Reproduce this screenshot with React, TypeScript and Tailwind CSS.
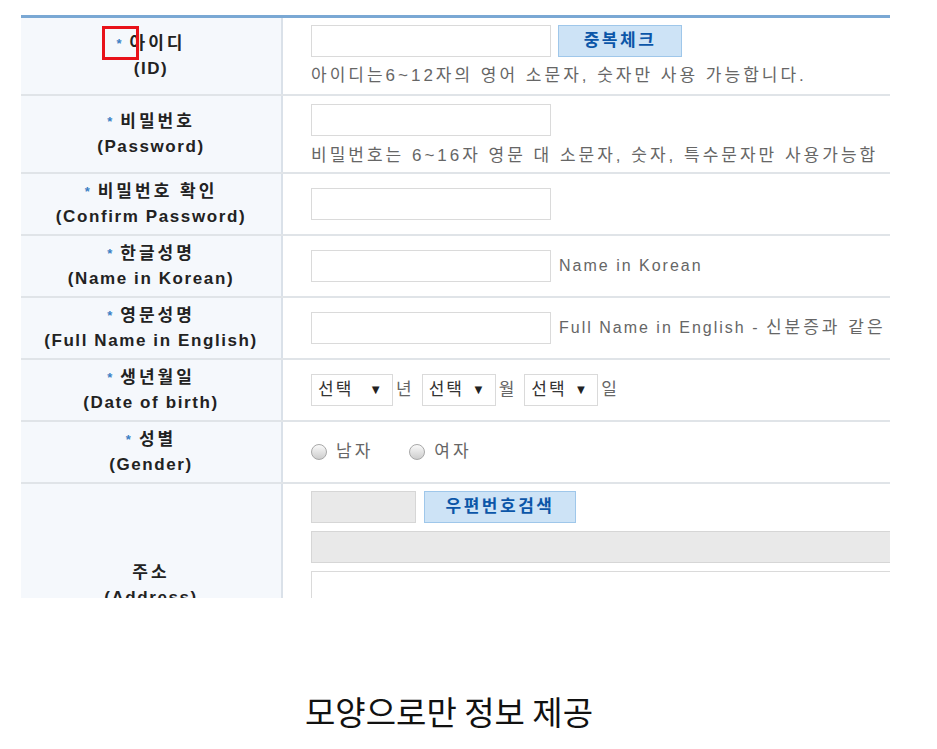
import React from "react";

type LabelProps = {
  ko: string;
  en: string;
  req?: boolean;
  mark?: boolean;
};

function Label({ ko, en, req = true, mark = false }: LabelProps) {
  return (
    <div className="w-[262px] shrink-0 self-stretch bg-[#f5f8fc] border-r-2 border-[#dae1e9] flex flex-col items-center justify-center text-[17px] leading-[25px] font-bold text-[#222]">
      <div className="flex items-center">
        {req && (
          <span className="relative mr-[8px] text-[13px] leading-[13px] text-[#3b7fc4]">
            *
            {mark && (
              <span className="absolute left-[-15px] top-[-11px] w-[37px] h-[34px] border-[3px] border-[#e8121a]" />
            )}
          </span>
        )}
        <span className="tracking-[3px]">{ko}</span>
      </div>
      <div className="tracking-[1.6px]">{en}</div>
    </div>
  );
}

function TextBox({ w = "w-[240px]", gray = false }: { w?: string; gray?: boolean }) {
  return (
    <input
      type="text"
      className={`${w} h-[32px] shrink-0 border outline-none ${gray ? "bg-[#e9e9e9] border-[#d6d6d6]" : "bg-white border-[#dadada]"}`}
    />
  );
}

function BlueButton({ children, w }: { children: React.ReactNode; w: string }) {
  return (
    <button
      type="button"
      className={`${w} h-[32px] shrink-0 bg-[#cde3f6] border border-[#9fc7ea] text-[17px] font-bold text-[#0b56a8] tracking-[2.5px]`}
    >
      {children}
    </button>
  );
}

function Select({ w, gap }: { w: string; gap: string }) {
  return (
    <div className={`${w} h-[32px] border border-[#dadada] bg-white flex items-center pl-[6px] text-[17px] text-[#333]`}>
      <span className="tracking-[2px]">선택</span>
      <span className={`${gap} text-[13px] text-[#222]`}>▼</span>
    </div>
  );
}

function Radio({ label }: { label: string }) {
  return (
    <label className="flex items-center gap-[9px] text-[17px] text-[#666] tracking-[3px]">
      <span className="w-[16px] h-[16px] rounded-full border border-[#a8a8a8] bg-gradient-to-b from-[#fafafa] to-[#cdcdcd]" />
      <span>{label}</span>
    </label>
  );
}

const hintKo = "text-[17px] leading-[20px] text-[#666] tracking-[3px] whitespace-nowrap";
const hintEn = "text-[16px] leading-[20px] text-[#666] tracking-[2px] whitespace-nowrap";

export default function App() {
  return (
    <div className="w-[937px] h-[749px] bg-white font-[family-name:'Liberation_Sans','Noto_Sans_CJK_KR',sans-serif] overflow-hidden">
      <div className="ml-[21px] mt-[15px] w-[869px] h-[583px] overflow-hidden border-t-[3px] border-[#7aa8d4]">
        {/* 아이디 */}
        <div className="flex h-[78px] border-b-2 border-[#e0e4e8]">
          <Label ko="아이디" en="(ID)" mark />
          <div className="flex-1 min-w-0 pl-[28px] pt-[7px] flex flex-col">
            <div className="flex gap-[7px]">
              <TextBox />
              <BlueButton w="w-[124px]">중복체크</BlueButton>
            </div>
            <p className={`mt-[9px] ${hintKo}`}>아이디는6~12자의 영어 소문자, 숫자만 사용 가능합니다.</p>
          </div>
        </div>

        {/* 비밀번호 */}
        <div className="flex h-[78px] border-b-2 border-[#e0e4e8]">
          <Label ko="비밀번호" en="(Password)" />
          <div className="flex-1 min-w-0 pl-[28px] pt-[8px] flex flex-col">
            <TextBox />
            <p className={`mt-[10px] ${hintKo}`}>비밀번호는 6~16자 영문 대 소문자, 숫자, 특수문자만 사용가능합</p>
          </div>
        </div>

        {/* 비밀번호 확인 */}
        <div className="flex h-[62px] border-b-2 border-[#e0e4e8]">
          <Label ko="비밀번호 확인" en="(Confirm Password)" />
          <div className="flex-1 pl-[28px] flex items-center">
            <TextBox />
          </div>
        </div>

        {/* 한글성명 */}
        <div className="flex h-[62px] border-b-2 border-[#e0e4e8]">
          <Label ko="한글성명" en="(Name in Korean)" />
          <div className="flex-1 pl-[28px] flex items-center gap-[8px]">
            <TextBox />
            <span className={hintEn}>Name in Korean</span>
          </div>
        </div>

        {/* 영문성명 */}
        <div className="flex h-[62px] border-b-2 border-[#e0e4e8]">
          <Label ko="영문성명" en="(Full Name in English)" />
          <div className="flex-1 min-w-0 pl-[28px] flex items-center gap-[8px]">
            <TextBox />
            <span className="whitespace-nowrap">
              <span className={hintEn}>Full Name in English - </span>
              <span className={hintKo}>신분증과 같은</span>
            </span>
          </div>
        </div>

        {/* 생년월일 */}
        <div className="flex h-[62px] border-b-2 border-[#e0e4e8]">
          <Label ko="생년월일" en="(Date of birth)" />
          <div className="flex-1 pl-[28px] flex items-center text-[17px] text-[#666]">
            <Select w="w-[82px]" gap="ml-[16px]" />
            <span className="ml-[3px] mr-[10px]">년</span>
            <Select w="w-[74px]" gap="ml-[8px]" />
            <span className="ml-[3px] mr-[10px]">월</span>
            <Select w="w-[74px]" gap="ml-[8px]" />
            <span className="ml-[3px]">일</span>
          </div>
        </div>

        {/* 성별 */}
        <div className="flex h-[62px] border-b-2 border-[#e0e4e8]">
          <Label ko="성별" en="(Gender)" />
          <div className="flex-1 pl-[28px] flex items-center gap-[36px]">
            <Radio label="남자" />
            <Radio label="여자" />
          </div>
        </div>

        {/* 주소 */}
        <div className="flex h-[204px] border-b-2 border-[#e0e4e8]">
          <Label ko="주소" en="(Address)" req={false} />
          <div className="flex-1 pl-[28px] pt-[7px] flex flex-col gap-[8px]">
            <div className="flex gap-[8px]">
              <TextBox w="w-[105px]" gray />
              <BlueButton w="w-[152px]">우편번호검색</BlueButton>
            </div>
            <TextBox w="w-[640px]" gray />
            <TextBox w="w-[640px]" />
          </div>
        </div>
      </div>

      <p className="mt-[93px] ml-[305px] text-[33px] leading-[40px] text-[#111] font-['Noto_Sans_CJK_KR',sans-serif]">
        모양으로만 정보 제공
      </p>
    </div>
  );
}
